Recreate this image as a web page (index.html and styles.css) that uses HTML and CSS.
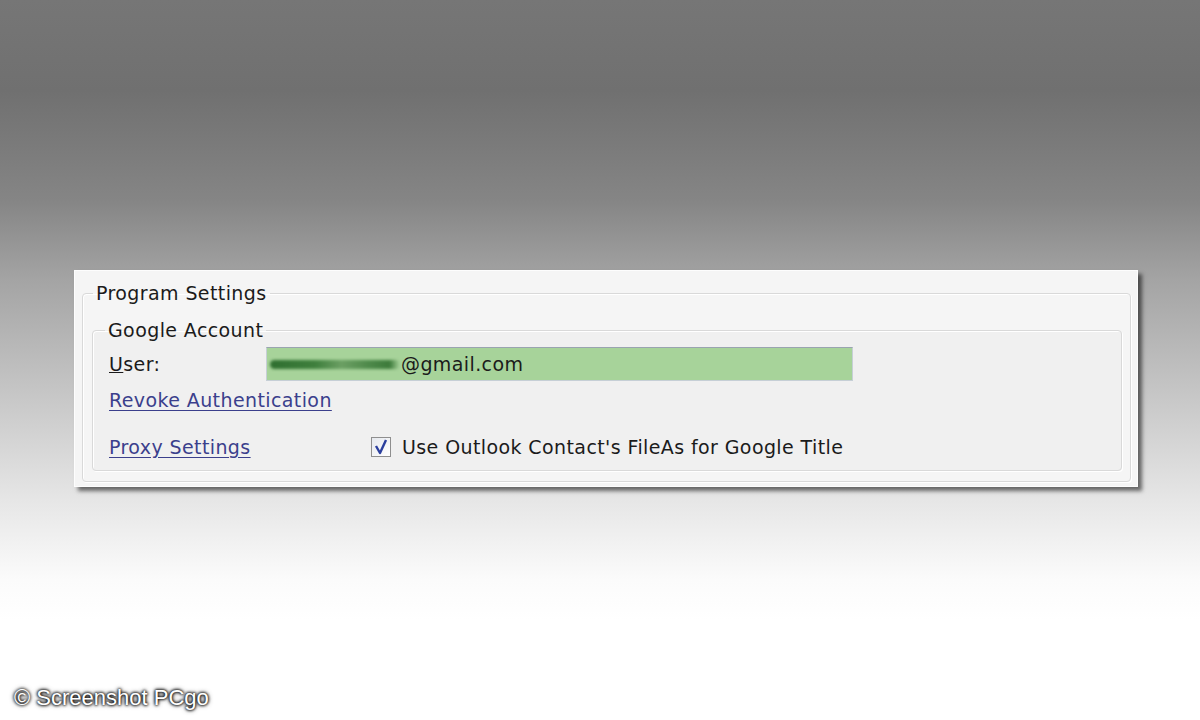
FILE: index.html
```html
<!DOCTYPE html>
<html lang="en">
<head>
    <meta charset="UTF-8">
    <title>Program Settings</title>
    <link rel="stylesheet" href="styles.css">
</head>
<body>
<div class="stage">
    <div class="panel">
        <fieldset class="group outer">
            <legend>Program Settings</legend>
            <fieldset class="group inner">
                <legend>Google Account</legend>
                <div class="row user-row">
                    <label class="label"><u>U</u>ser:</label>
                    <div class="field">
                        <span class="smudge"></span>
                        <span class="mail">@gmail.com</span>
                    </div>
                </div>
                <div class="row revoke-row">
                    <a class="link" href="#">Revoke Authentication</a>
                </div>
                <div class="row last-row">
                    <a class="link proxy" href="#">Proxy Settings</a>
                    <label class="check">
                        <span class="box">
                            <svg width="14" height="16" viewBox="0 0 14 16">
                                <path d="M2 7 L6 14 L12 1" fill="none" stroke="#2b3f9e" stroke-width="2.4" stroke-linejoin="round"/>
                            </svg>
                        </span>
                        Use Outlook Contact's FileAs for Google Title
                    </label>
                </div>
            </fieldset>
        </fieldset>
    </div>
</div>
<div class="credit">© Screenshot PCgo</div>
</body>
</html>
```

FILE: styles.css
```css
html, body {
    margin: 0;
    height: 720px;
    overflow: hidden;
}
body {
    font-family: "DejaVu Sans", Verdana, sans-serif;
    color: #1b1b1b;
    background: linear-gradient(to bottom,
        #767676 0px,
        #707070 90px,
        #858585 200px,
        #a4a4a4 280px,
        #c8c8c8 400px,
        #e6e6e6 500px,
        #fbfbfb 580px,
        #ffffff 620px);
}
.stage {
    padding: 270px 0 0 74px;
}
.panel {
    box-sizing: border-box;
    width: 1064px;
    height: 217px;
    background-color: #f5f5f5;
    border: 1px solid #fdfdfd;
    padding: 11px 6px 0 7px;
    box-shadow: 4px 4px 4px rgba(0, 0, 0, 0.55);
    overflow: hidden;
}
.group {
    margin: 0;
    border: 1px solid #d9d9d9;
    border-radius: 4px;
    box-shadow: inset 1px 1px 0 #fff, 1px 1px 0 #fff;
}
.group legend {
    font-size: 19px;
    line-height: 22px;
    letter-spacing: 0.4px;
    padding: 0 3px;
}
.outer {
    padding: 15px 8px 10px 9px;
}
.outer > legend {
    margin-left: 1px;
}
.inner {
    padding: 6px 10px 1px 16px;
    background-color: #f0f0f0;
}
.inner > legend {
    margin-left: -4px;
}
.row {
    display: flex;
    align-items: center;
    font-size: 19px;
    letter-spacing: 0.4px;
}
.user-row {
    height: 34px;
}
.label {
    width: 157px;
}
.field {
    box-sizing: border-box;
    width: 587px;
    height: 34px;
    display: flex;
    align-items: center;
    background-color: #a7d39a;
    border: 1px solid #c6cfd6;
    border-top-color: #9aa4b0;
    padding-left: 3px;
}
.smudge {
    width: 130px;
    height: 9px;
    margin-right: 1px;
    border-radius: 5px;
    background: linear-gradient(to right, #2f6f30, #3f7f3d 35%, #6b9f63 55%, #4f8a4b 75%, #3c7a3a 92%, rgba(167, 211, 154, 0));
    filter: blur(1.5px);
}
.link {
    color: #3b3f8c;
    text-decoration: underline;
    text-underline-offset: 3px;
}
.revoke-row {
    height: 38px;
}
.last-row {
    height: 44px;
    margin-top: 6px;
}
.proxy {
    width: 262px;
}
.check {
    display: flex;
    align-items: center;
}
.box {
    box-sizing: border-box;
    width: 20px;
    height: 20px;
    margin-right: 11px;
    border: 1px solid #8f8f8f;
    background: linear-gradient(to bottom right, #e6e9ee, #ffffff);
    display: flex;
    align-items: center;
    justify-content: center;
}
.credit {
    position: absolute;
    left: 14px;
    top: 685px;
    font-family: "Liberation Sans", Arial, sans-serif;
    font-size: 22px;
    color: #ffffff;
    text-shadow: 0 0 3px #000, 0 0 3px #000, 0 0 5px #333;
}
```
